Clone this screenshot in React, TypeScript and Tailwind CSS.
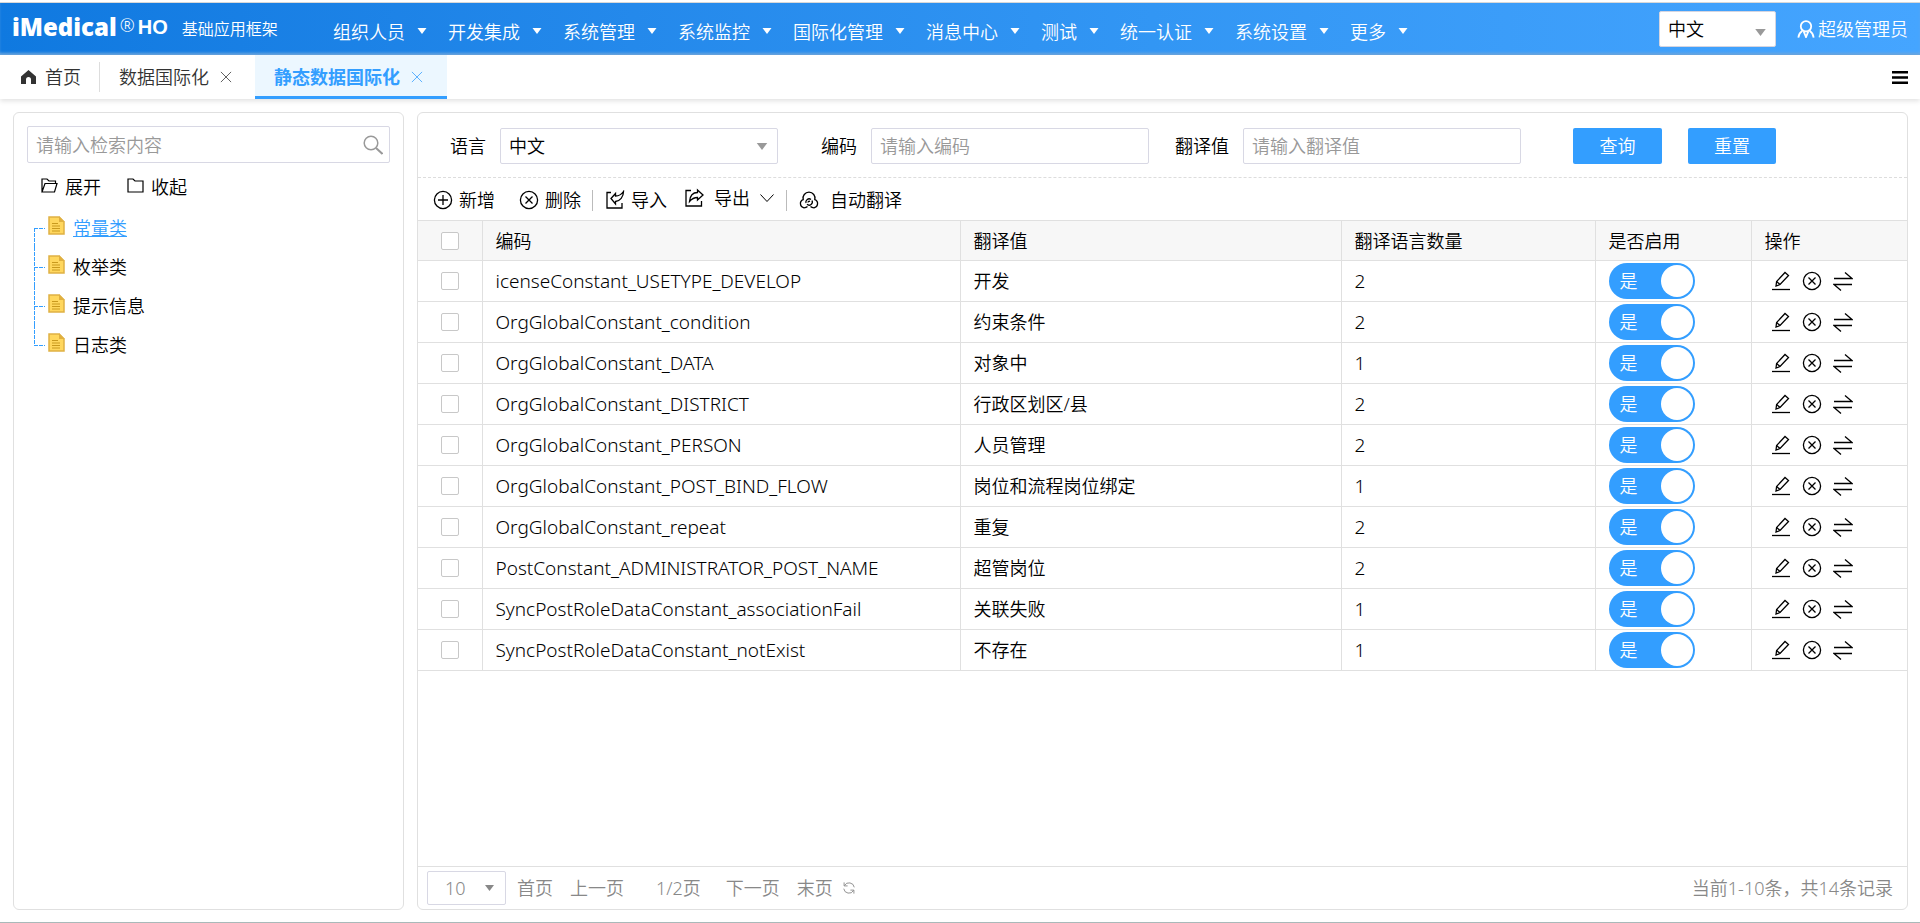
import { useState } from 'react';
import type { ReactNode } from 'react';

const MENUS = ['组织人员', '开发集成', '系统管理', '系统监控', '国际化管理', '消息中心', '测试', '统一认证', '系统设置', '更多'];

const TREE = ['常量类', '枚举类', '提示信息', '日志类'];

type Row = { code: string; value: string; langs: number };

const ROWS: Row[] = [
  { code: 'icenseConstant_USETYPE_DEVELOP', value: '开发', langs: 2 },
  { code: 'OrgGlobalConstant_condition', value: '约束条件', langs: 2 },
  { code: 'OrgGlobalConstant_DATA', value: '对象中', langs: 1 },
  { code: 'OrgGlobalConstant_DISTRICT', value: '行政区划区/县', langs: 2 },
  { code: 'OrgGlobalConstant_PERSON', value: '人员管理', langs: 2 },
  { code: 'OrgGlobalConstant_POST_BIND_FLOW', value: '岗位和流程岗位绑定', langs: 1 },
  { code: 'OrgGlobalConstant_repeat', value: '重复', langs: 2 },
  { code: 'PostConstant_ADMINISTRATOR_POST_NAME', value: '超管岗位', langs: 2 },
  { code: 'SyncPostRoleDataConstant_associationFail', value: '关联失败', langs: 1 },
  { code: 'SyncPostRoleDataConstant_notExist', value: '不存在', langs: 1 },
];

function Icon({ children, className = 'size-5' }: { children: ReactNode; className?: string }) {
  return (
    <svg
      viewBox="0 0 20 20"
      className={`shrink-0 ${className}`}
      fill="none"
      stroke="currentColor"
      strokeWidth="1.3"
      aria-hidden="true"
    >
      {children}
    </svg>
  );
}

function Caret({ className }: { className: string }) {
  return (
    <svg viewBox="0 0 12 8" className={`shrink-0 ${className}`} fill="currentColor" aria-hidden="true">
      <path d="M0 0h12L6 8z" />
    </svg>
  );
}

const PlusIcon = () => (
  <Icon><circle cx="10" cy="10" r="8.6" /><path d="M10 5v10M5 10h10" /></Icon>
);
const CancelIcon = () => (
  <Icon><circle cx="10" cy="10" r="8.6" /><path d="M6.5 6.5l7 7M13.5 6.5l-7 7" /></Icon>
);
const ImportIcon = () => (
  <Icon>
    <path d="M6 2.500H2v15.500h15v-5" />
    <path d="M6 8.500L10.500 3.500V6C14 6 16.500 4.500 18.500 1.500 18.500 7 15 11 10.500 11.500V14z" />
  </Icon>
);
const ExportIcon = () => (
  <Icon>
    <path d="M7 2.500H2v15.500h15.500v-5" />
    <path d="M19 7L13.500 2v2.500C9 4.500 6 8 5.500 13.500 8 10.500 10.500 9.500 13.500 9.500V12z" />
  </Icon>
);
const CloudIcon = () => (
  <Icon>
    <path d="M8.500 16.500C7.500 17.500 6.500 17.800 5 17.800A4.200 4.200 0 0 1 4.200 9.700 6 6 0 1 1 15.800 9.700 4.200 4.200 0 0 1 15 17.800C13.500 17.800 12.500 17.500 11.500 16.500" />
    <path d="M7 13a3.200 3.200 0 0 1 5-3.500M13 10.500a3.200 3.200 0 0 1-5 3.800" />
    <path d="M9 12.500a1.300 1.300 0 0 1 2-1" />
  </Icon>
);
const EditIcon = () => (
  <Icon>
    <path d="M1 18.500h18" />
    <path d="M5 15l.6-4.500L14 1.500l3.500 3-8.500 9z" />
    <path d="M5.600 10.500L9 13.500" />
  </Icon>
);
const SwapIcon = () => (
  <Icon><path d="M1 7.500h18L12 1.500M19 13.500H1L8 19.500" /></Icon>
);
const CloseIcon = () => (
  <Icon className="size-3"><path d="M1.500 1.500l17 17M18.500 1.500l-17 17" /></Icon>
);

function DocIcon() {
  return (
    <svg viewBox="0 0 17 19" className="mb-1 h-[19px] w-[17px] shrink-0" aria-hidden="true">
      <path d="M1 1h10l5 5v12H1z" fill="#ffd75e" stroke="#dfb144" strokeWidth="1.500" />
      <path d="M11 0l6 6h-6z" fill="#e0b040" />
      <path d="M4 7.500h6M4 10h8M4 12.500h8M4 15h8" stroke="#c99a1e" />
    </svg>
  );
}

function TreeItem({ label, index, selected, onSelect }: { label: string; index: number; selected: boolean; onSelect: () => void }) {
  const first = index === 0;
  const last = index === TREE.length - 1;
  return (
    <li className="flex h-[39px] items-center">
      <svg className="h-[39px] w-[14px] shrink-0" stroke="#339eff" strokeDasharray="4 1" aria-hidden="true">
        <path d={`M.5 ${first ? 20 : 0}V${last ? 20 : 39}M0 20.500h11`} fill="none" />
      </svg>
      <DocIcon />
      <button
        type="button"
        onClick={onSelect}
        className={selected ? 'ml-2 text-[#339eff] underline' : 'ml-2'}
      >
        {label}
      </button>
    </li>
  );
}

function Switch({ label }: { label: string }) {
  const [on, setOn] = useState(true);
  return (
    <button
      type="button"
      role="switch"
      aria-checked={on}
      aria-label={label}
      onClick={() => setOn(!on)}
      className={`flex h-9 w-[86px] items-center justify-between rounded-full pr-0.5 pl-[11px] text-white ${on ? 'bg-[#339eff]' : 'flex-row-reverse bg-gray-400'}`}
    >
      <span>{on ? '是' : '否'}</span>
      <span className="size-8 rounded-full bg-white" />
    </button>
  );
}

function Check({ label }: { label: string }) {
  return (
    <input
      type="checkbox"
      aria-label={label}
      className="block size-[18px] appearance-none rounded-xs border border-[#c8c8c8] bg-white checked:bg-[#339eff]"
    />
  );
}

function ToolButton({ icon, children }: { icon: ReactNode; children: ReactNode }) {
  return (
    <button type="button" className="flex items-center gap-[6px]">
      {icon}
      {children}
    </button>
  );
}

function Header() {
  return (
    <header className="flex h-[52px] items-center bg-linear-to-r from-[#0f79e0] via-[#3296f4] via-60% to-[#45a5ff] text-white shadow-[inset_0_-3px_3px_-1px_#6fa9e0]">
      <div className="flex w-[333px] shrink-0 items-center pb-1 pl-3">
        <span className="font-['Open_Sans'] text-2xl leading-6 font-extrabold">iMedical</span>
        <span className="mb-1 ml-[3px] text-lg leading-5">®</span>
        <span className="ml-[3px] font-['Liberation_Sans'] text-xl leading-6 font-bold">HO</span>
        <span className="ml-[14px] pt-1 text-base">基础应用框架</span>
      </div>
      <nav className="flex min-w-0 flex-1 items-center gap-[21px] pt-1.5">
        {MENUS.map((menu) => (
          <button key={menu} type="button" className="flex shrink-0 items-center gap-3">
            {menu}
            <Caret className="mb-0.5 h-[6px] w-[10px]" />
          </button>
        ))}
      </nav>
      <div className="relative mr-[21px] text-black">
        <select
          aria-label="语言"
          className="h-9 w-[117px] appearance-none rounded-xs border border-[#d5d5e0] bg-white pl-2"
        >
          <option>中文</option>
        </select>
        <Caret className="pointer-events-none absolute right-[10px] bottom-[11px] h-[7px] w-[11px] text-[#999]" />
      </div>
      <a href="#user" className="mr-3 flex items-center gap-[3px]">
        <Icon className="size-[18px]">
          <circle cx="10" cy="7" r="5.800" strokeWidth="2" />
          <path d="M6 12c-3 2-4 4-4.500 7.500M14 12c3 2 4 4 4.500 7.500M7.500 13l2.500 6 2.500-6" strokeWidth="2" />
        </Icon>
        超级管理员
      </a>
    </header>
  );
}

function TabBar() {
  return (
    <div className="flex h-11 items-stretch bg-white text-[#333] shadow-[0_2px_5px_rgba(0,0,0,0.12)]">
      <button type="button" className="my-[7px] flex items-center gap-[9px] border-r border-[#ddd] pr-[18px] pl-[21px]">
        <svg viewBox="0 0 15 14" className="h-[14px] w-[15px]" fill="currentColor" aria-hidden="true">
          <path d="M7.500 0L15 6.500V14H10V9.500a2.500 2.500 0 0 0-5 0V14H0V6.500z" />
        </svg>
        首页
      </button>
      <button type="button" className="flex items-center gap-[11px] pr-[23px] pl-[19px]">
        数据国际化
        <CloseIcon />
      </button>
      <button type="button" className="flex items-center gap-[11px] border-b-3 border-[#339eff] bg-[#ecf7ff] pt-[3px] pr-[24px] pl-[19px] text-[#339eff]">
        <span className="font-bold">静态数据国际化</span>
        <CloseIcon />
      </button>
      <button type="button" aria-label="菜单" className="mr-3 ml-auto text-black">
        <svg viewBox="0 0 16 13" className="h-[13px] w-4" fill="currentColor" aria-hidden="true">
          <path d="M0 0h16v2.500H0zM0 5.200h16v2.500H0zM0 10.400h16v2.500H0z" />
        </svg>
      </button>
    </div>
  );
}

function TreePanel() {
  const [selected, setSelected] = useState(0);
  return (
    <aside className="w-[391px] shrink-0 rounded-md border border-[#e0e0e0] p-[13px]">
      <div className="flex h-[37px] items-center rounded-xs border border-[#d8d8e4] pr-[6px]">
        <input
          aria-label="检索"
          placeholder="请输入检索内容"
          className="h-full min-w-0 flex-1 pl-2 outline-none placeholder:text-[#999]"
        />
        <Icon className="size-5 text-[#999]">
          <circle cx="8" cy="8" r="6.800" strokeWidth="1.500" />
          <path d="M13 13l6.500 6" strokeWidth="2" />
        </Icon>
      </div>
      <div className="flex items-center gap-[26px] pt-3 pl-[14px]">
        <button type="button" className="flex items-center gap-[7px]">
          <svg viewBox="0 0 17 15" className="mb-1 h-[15px] w-[17px]" fill="none" stroke="currentColor" strokeWidth="1.200" aria-hidden="true">
            <path d="M1 14V1h5l2 2h6.500v2.500M1 14L4 5.500h12L13.500 14z" />
          </svg>
          展开
        </button>
        <button type="button" className="flex items-center gap-[7px]">
          <svg viewBox="0 0 17 15" className="mb-1 h-[15px] w-[17px]" fill="none" stroke="currentColor" strokeWidth="1.200" aria-hidden="true">
            <path d="M1 14V1h5l2 2h8v11z" />
          </svg>
          收起
        </button>
      </div>
      <ul className="pt-[9px] pl-[7px]">
        {TREE.map((label, i) => (
          <TreeItem key={label} label={label} index={i} selected={selected === i} onSelect={() => setSelected(i)} />
        ))}
      </ul>
    </aside>
  );
}

function Filters() {
  return (
    <form className="flex h-[65px] items-center border-b border-dashed border-[#ddd] pt-1.5 pb-1 pl-8" onSubmit={(e) => e.preventDefault()}>
      <label htmlFor="lang" className="mr-[14px]">语言</label>
      <div className="relative mr-[43px]">
        <select id="lang" className="h-9 w-[278px] appearance-none rounded-xs border border-[#d8d8e4] bg-white pl-2">
          <option>中文</option>
        </select>
        <Caret className="pointer-events-none absolute top-[15px] right-[10px] h-[7px] w-[12px] text-[#999]" />
      </div>
      <label htmlFor="code" className="mr-[14px]">编码</label>
      <input id="code" placeholder="请输入编码" className="mr-[26px] h-9 w-[278px] rounded-xs border border-[#d8d8e4] px-2 placeholder:text-[#999]" />
      <label htmlFor="value" className="mr-[14px]">翻译值</label>
      <input id="value" placeholder="请输入翻译值" className="mr-[52px] h-9 w-[278px] rounded-xs border border-[#d8d8e4] px-2 placeholder:text-[#999]" />
      <button type="submit" className="mr-[26px] h-9 w-[89px] rounded-xs bg-[#339eff] text-white">查询</button>
      <button type="reset" className="h-9 w-[88px] rounded-xs bg-[#339eff] text-white">重置</button>
    </form>
  );
}

function Toolbar() {
  return (
    <div className="flex h-[42px] items-center pt-0.5 pl-[15px]">
      <div className="mr-6"><ToolButton icon={<PlusIcon />}>新增</ToolButton></div>
      <ToolButton icon={<CancelIcon />}>删除</ToolButton>
      <span className="mr-3 ml-[11px] h-[21px] w-px bg-[#bbb]" />
      <div className="mr-[17px]"><ToolButton icon={<ImportIcon />}>导入</ToolButton></div>
      <button type="button" className="flex items-center gap-[10px] pb-1">
        <ExportIcon />
        导出
        <svg viewBox="0 0 14 8" className="h-2 w-[14px]" fill="none" stroke="currentColor" aria-hidden="true">
          <path d="M.5.5L7 7.500 13.500.5" />
        </svg>
      </button>
      <span className="mx-3 h-[21px] w-px bg-[#bbb]" />
      <button type="button" className="flex items-center gap-[11px]">
        <CloudIcon />
        自动翻译
      </button>
    </div>
  );
}

function DataTable() {
  return (
    <table className="w-full table-fixed border-collapse text-left">
      <colgroup>
        <col className="w-[64px]" />
        <col />
        <col className="w-[381px]" />
        <col className="w-[254px]" />
        <col className="w-[156px]" />
        <col className="w-[156px]" />
      </colgroup>
      <thead>
        <tr className="h-10 border-y border-[#e0e0e0] bg-[#f7f7f7]">
          <th className="border-r border-[#e0e0e0] pl-[23px]"><Check label="全选" /></th>
          <th className="border-r border-[#e0e0e0] px-[13px] font-[350]">编码</th>
          <th className="border-r border-[#e0e0e0] px-[13px] font-[350]">翻译值</th>
          <th className="border-r border-[#e0e0e0] px-[13px] font-[350]">翻译语言数量</th>
          <th className="border-r border-[#e0e0e0] px-[13px] font-[350]">是否启用</th>
          <th className="px-[13px] font-[350]">操作</th>
        </tr>
      </thead>
      <tbody>
        {ROWS.map((row) => (
          <tr key={row.code} className="h-[41px] border-b border-[#e0e0e0]">
            <td className="border-r border-[#e0e0e0] pl-[23px]"><Check label={row.code} /></td>
            <td className="border-r border-[#e0e0e0] px-[13px] text-[19px]">{row.code}</td>
            <td className="border-r border-[#e0e0e0] px-[13px]">{row.value}</td>
            <td className="border-r border-[#e0e0e0] px-[13px] text-[19px]">{row.langs}</td>
            <td className="border-r border-[#e0e0e0] px-[13px]"><Switch label={row.code} /></td>
            <td className="pl-[19px]">
              <div className="flex items-center gap-[11px]">
                <button type="button" aria-label="编辑"><EditIcon /></button>
                <button type="button" aria-label="删除"><CancelIcon /></button>
                <button type="button" aria-label="翻译"><SwapIcon /></button>
              </div>
            </td>
          </tr>
        ))}
      </tbody>
    </table>
  );
}

function Pager() {
  return (
    <footer className="mt-auto flex h-[43px] items-center border-t border-[#e0e0e0] pr-[14px] pl-[9px] text-[#888]">
      <div className="relative mr-[11px]">
        <select aria-label="每页条数" className="h-[34px] w-[79px] appearance-none rounded-xs border border-[#d8d8e4] bg-white pl-[17px]">
          <option>10</option>
        </select>
        <Caret className="pointer-events-none absolute top-[14px] right-3 h-[6px] w-[9px] text-[#888]" />
      </div>
      <button type="button" className="mr-[17px]">首页</button>
      <button type="button" className="mr-8">上一页</button>
      <span className="mr-[25px]">1/2页</span>
      <button type="button" className="mr-[17px]">下一页</button>
      <button type="button" className="mr-[9px]">末页</button>
      <button type="button" aria-label="刷新">
        <Icon className="size-[14px]">
          <path d="M3 2v5h5M3.500 6.500A7.500 7.500 0 0 1 17.500 9M17 18v-5h-5M16.500 13.500A7.500 7.500 0 0 1 2.500 11" />
        </Icon>
      </button>
      <span className="ml-auto">当前1-10条，共14条记录</span>
    </footer>
  );
}

export default function App() {
  return (
    <div className="flex min-h-screen flex-col border-b border-[#a9b9b9] bg-white pt-0.5 font-['Noto_Sans','Noto_Sans_CJK_SC',sans-serif] text-lg leading-6 font-[350] text-black">
      <div className="border-t border-[#d8d8d8]">
        <Header />
        <TabBar />
      </div>
      <div className="flex flex-1 gap-[13px] pt-[13px] pr-3 pb-3 pl-[13px]">
        <TreePanel />
        <main className="flex min-w-0 flex-1 flex-col rounded-md border border-[#e0e0e0]">
          <Filters />
          <Toolbar />
          <DataTable />
          <Pager />
        </main>
      </div>
    </div>
  );
}
